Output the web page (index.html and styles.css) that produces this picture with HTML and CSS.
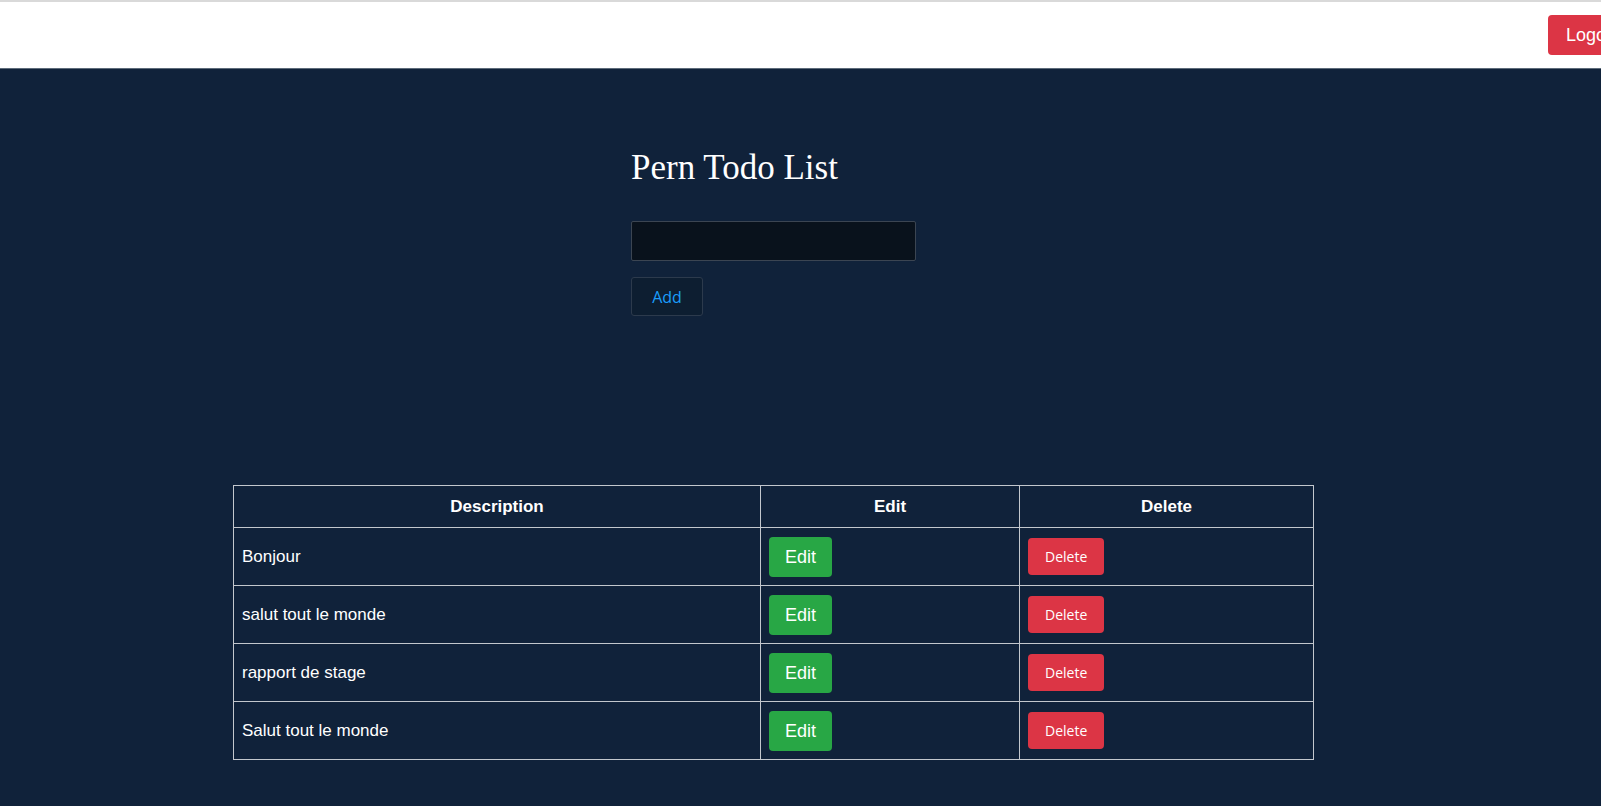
FILE: index.html
```html
<!DOCTYPE html>
<html lang="fr">
<head>
<meta charset="utf-8">
<title>Pern Todo List</title>
<link rel="stylesheet" href="styles.css">
</head>
<body>
<header class="topbar">
  <button class="btn btn-logout">Logout</button>
</header>
<main class="page">
  <section class="input-area">
    <h1 class="title">Pern Todo List</h1>
    <form class="todo-form">
      <input class="todo-input" type="text">
      <button class="btn btn-add" type="button">Add</button>
    </form>
  </section>
  <section class="list-area">
    <table class="todo-table">
      <thead>
        <tr>
          <th class="col-desc">Description</th>
          <th class="col-edit">Edit</th>
          <th class="col-del">Delete</th>
        </tr>
      </thead>
      <tbody>
        <tr>
          <td>Bonjour</td>
          <td><button class="btn btn-edit">Edit</button></td>
          <td><button class="btn btn-delete">Delete</button></td>
        </tr>
        <tr>
          <td>salut tout le monde</td>
          <td><button class="btn btn-edit">Edit</button></td>
          <td><button class="btn btn-delete">Delete</button></td>
        </tr>
        <tr>
          <td>rapport de stage</td>
          <td><button class="btn btn-edit">Edit</button></td>
          <td><button class="btn btn-delete">Delete</button></td>
        </tr>
        <tr>
          <td>Salut tout le monde</td>
          <td><button class="btn btn-edit">Edit</button></td>
          <td><button class="btn btn-delete">Delete</button></td>
        </tr>
      </tbody>
    </table>
  </section>
</main>
</body>
</html>
```

FILE: styles.css
```css
html, body {
  margin: 0;
  padding: 0;
}
body {
  background: #10223a;
  color: #fff;
  font-family: "Liberation Sans", Arial, sans-serif;
  font-size: 17px;
  overflow: hidden;
  height: 806px;
}
.topbar {
  box-sizing: border-box;
  height: 69px;
  background: #fff;
  border-top: 2px solid #d9d9d9;
  border-bottom: 1px solid #5d6b7a;
  display: flex;
  align-items: center;
  justify-content: flex-end;
  overflow: hidden;
}
.btn {
  border: 1px solid transparent;
  border-radius: 4px;
  cursor: pointer;
  font-family: "Liberation Sans", Arial, sans-serif;
}
.btn-logout {
  background: #dc3545;
  color: #fff;
  font-size: 18px;
  line-height: 26px;
  padding: 6px 17px;
  margin-right: -38px;
  flex-shrink: 0;
}
.page {
  display: flex;
  flex-direction: column;
}
.input-area {
  margin-left: 631px;
  padding-top: 78px;
  height: 344px;
  box-sizing: border-box;
}
.title {
  font-family: "Liberation Serif", "Times New Roman", serif;
  font-weight: normal;
  font-size: 35px;
  line-height: 42px;
  margin: 0 0 32px 0;
  color: #fff;
}
.todo-form {
  display: flex;
  flex-direction: column;
  align-items: flex-start;
  gap: 16px;
}
.todo-input {
  box-sizing: border-box;
  width: 285px;
  height: 40px;
  background: #09121c;
  border: 1px solid #3b4552;
  border-radius: 2px;
  color: #fff;
  padding: 0 8px;
  font-size: 16px;
}
.btn-add {
  box-sizing: border-box;
  width: 72px;
  height: 39px;
  background: #0d1e31;
  border: 1px solid #2c3a4c;
  border-radius: 3px;
  color: #1a9dfc;
  font-family: "Open Sans", "Noto Sans", sans-serif;
  font-size: 16px;
  padding: 0;
}
.list-area {
  margin-left: 233px;
  margin-top: 72px;
}
.todo-table {
  border-collapse: collapse;
  width: 1081px;
}
.todo-table th,
.todo-table td {
  border: 1px solid #c3c7cd;
  padding: 8px;
  text-align: left;
  vertical-align: middle;
  color: #fff;
}
.todo-table th {
  text-align: center;
  font-weight: bold;
  height: 25px;
  line-height: 24px;
}
.todo-table td {
  height: 41px;
}
.col-desc { width: 510px; }
.col-edit { width: 242px; }
.col-del { width: 277px; }
.btn-edit {
  background: #28a745;
  color: #fff;
  font-size: 18px;
  line-height: 26px;
  padding: 6px 15px;
  display: block;
}
.btn-delete {
  background: #dc3545;
  color: #fff;
  font-family: "Open Sans", "Noto Sans", sans-serif;
  font-size: 14px;
  line-height: 21px;
  padding: 7px 16px;
}
```
